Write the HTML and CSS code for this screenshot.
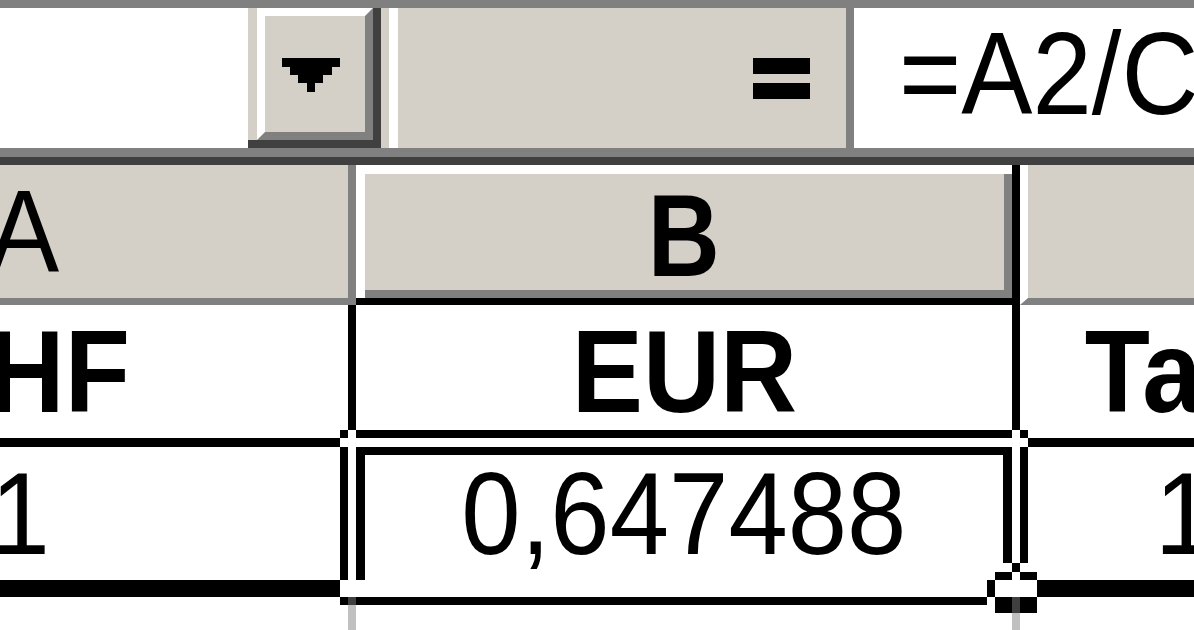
FILE: index.html
```html
<!DOCTYPE html>
<html lang="de">
  <head>
    <meta charset="UTF-8" />
    <meta name="viewport" content="width=device-width, initial-scale=1.0" />
    <title>Mappe1</title>
    <link rel="stylesheet" href="styles.css">
  </head>
  <body>
    <div class="band band-top"></div>

    <div class="formula-bar">
      <div class="name-box"></div>
      <div class="name-drop">
        <div class="drop-gap"></div>
        <div class="drop-btn">
          <div class="drop-face">
            <svg class="drop-arrow" width="58" height="34" viewBox="0 0 58 34">
              <polygon points="0,0 58,0 58,9 50,9 50,17 41,17 41,25 33,25 33,34 25,34 25,25 16,25 16,17 8,17 8,9 0,9" fill="#000" />
            </svg>
          </div>
        </div>
      </div>
      <div class="edit-tools">
        <div class="edit-grip"></div>
        <div class="edit-face">
          <!-- "edit formula" button -->
          <svg width="57" height="41" viewBox="0 0 57 41">
            <rect x="0" y="0" width="57" height="16" fill="#000" />
            <rect x="0" y="25" width="57" height="16" fill="#000" />
          </svg>
        </div>
      </div>
      <div class="formula-input"><span class="txt">=A2/C2</span></div>
    </div>

    <div class="band band-mid"></div>
    <div class="band band-dark"></div>

    <div class="sheet">
      <div class="row col-heads">
        <div class="head"><span class="txt">A</span></div>
        <div class="head head-active"><span class="txt">B</span></div>
        <div class="head"><span class="txt">C</span></div>
      </div>
      <div class="row row-1">
        <div class="cell"><span class="txt">CHF</span></div>
        <div class="cell"><span class="txt">EUR</span></div>
        <div class="cell"><span class="txt">Tageskurs</span></div>
      </div>
      <div class="row row-2">
        <div class="cell"><span class="txt">1</span></div>
        <div class="cell"><span class="txt">0,647488</span></div>
        <div class="cell"><span class="txt">1,54443</span></div>
      </div>
      <div class="row row-3">
        <div class="cell"></div>
        <div class="cell"></div>
        <div class="cell"></div>
      </div>

      <!-- selection frame around B2, inverted like the XOR frame -->
      <svg class="selection" width="1194" height="465" viewBox="0 0 1194 465">
        <rect x="340" y="265" width="688" height="25" fill="#fff" />
        <rect x="340" y="265" width="25" height="175" fill="#fff" />
        <rect x="1003" y="265" width="25" height="133" fill="#fff" />
        <rect x="340" y="415" width="647" height="25" fill="#fff" />
        <rect x="995" y="407" width="42" height="41" fill="#fff" />
      </svg>
    </div>
  </body>
</html>
```

FILE: styles.css
```css
body {
  margin: 0;
  width: 1194px;
  height: 630px;
  overflow: hidden;
  background: #fff;
  font-family: "Liberation Sans", Arial, sans-serif;
  color: #000;
}
.txt {
  display: inline-block;
  transform: scaleX(0.92);
  white-space: nowrap;
  line-height: 1;
}

/* window chrome bands */
.band-top {
  height: 8px;
  background: #808080;
}
.band-mid {
  height: 9px;
  background: #808080;
}
.band-dark {
  height: 8px;
  background: #404040;
}

/* formula bar */
.formula-bar {
  display: flex;
  height: 140px;
}
.name-box {
  width: 248px;
  background: #fff;
}
.name-drop {
  display: flex;
  box-sizing: border-box;
  width: 133px;
  border-bottom: 8px solid #404040;
}
.drop-gap {
  width: 9px;
  background: #d4d0c8;
}
.drop-btn {
  flex: 1;
  border-right: 8px solid #404040;
}
.drop-face {
  display: flex;
  align-items: center;
  justify-content: center;
  box-sizing: border-box;
  height: 100%;
  background: #d4d0c8;
  border-top: 8px solid #fff;
  border-left: 8px solid #fff;
  border-right: 8px solid #808080;
  border-bottom: 8px solid #808080;
}
.drop-arrow {
  margin-right: 8px;
  margin-top: 2px;
}
.edit-tools {
  display: flex;
  box-sizing: border-box;
  width: 473px;
  background: #d4d0c8;
  border-right: 8px solid #808080;
}
.edit-grip {
  width: 9px;
  margin-left: 8px;
  background: #fff;
}
.edit-face {
  flex: 1;
  display: flex;
  align-items: center;
  justify-content: flex-end;
  padding-right: 36px;
}
.formula-input {
  flex: 1;
  display: flex;
  align-items: center;
  padding-left: 45px;
  padding-bottom: 8px;
  background: #fff;
  font-size: 116px;
  overflow: hidden;
}
.formula-input .txt {
  transform-origin: left center;
}

/* worksheet */
.sheet {
  position: relative;
}
.row {
  display: flex;
  margin-left: -308px;
}
.row > div {
  flex: 0 0 664px;
  box-sizing: border-box;
  display: flex;
  align-items: center;
  justify-content: center;
  font-size: 116px;
}
.col-heads {
  height: 140px;
}
.head {
  background: #d4d0c8;
  border-left: 8px solid #fff;
  border-right: 8px solid #808080;
  border-bottom: 7px solid #808080;
}
.head-active {
  border-left: 0;
  border-right: 8px solid #000;
  border-bottom: 7px solid #000;
  box-shadow: inset 9px 9px 0 #fff, inset -8px -8px 0 #808080;
  font-weight: bold;
}
.head-active .txt {
  transform: scaleX(0.86);
  margin-top: 9px;
}
.row-1 {
  height: 142px;
}
.row-1 .cell {
  border-right: 8px solid #000;
  border-bottom: 9px solid #000;
  font-weight: bold;
}
.row-2 {
  height: 150px;
}
.row-2 .cell {
  border-right: 8px solid #000;
  border-bottom: 17px solid #000;
}
.row-3 {
  height: 40px;
}
.row-3 .cell {
  border-right: 8px solid #c0c0c0;
}
.selection {
  position: absolute;
  top: 0;
  left: 0;
  mix-blend-mode: difference;
  pointer-events: none;
}
```
